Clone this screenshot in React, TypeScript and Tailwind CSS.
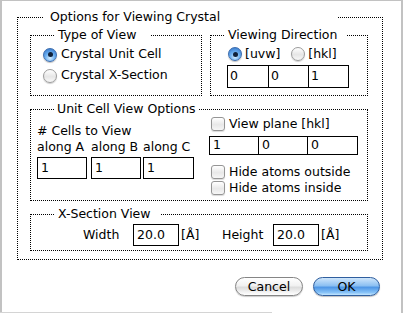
import type { ReactNode } from "react";

const Radio = ({ on }: { on?: boolean }) =>
  on ? (
    <span className="flex h-[14px] w-[14px] shrink-0 items-center justify-center rounded-full border border-[#3b6cae] bg-[radial-gradient(circle_at_50%_75%,#d2ecff_0%,#6aaef0_45%,#2d6fc4_100%)] shadow-[0_1px_1px_rgba(0,0,0,0.25)]">
      <span className="h-[5px] w-[5px] rounded-full bg-[#0f213a]" />
    </span>
  ) : (
    <span className="block h-[14px] w-[14px] shrink-0 rounded-full border border-[#9b9b9b] bg-[linear-gradient(#ffffff,#e6e6e6_55%,#f8f8f8)] shadow-[0_1px_1px_rgba(0,0,0,0.2)]" />
  );

const Check = () => (
  <span className="block h-[14px] w-[14px] shrink-0 rounded-[3px] border border-[#959595] bg-[linear-gradient(#ffffff,#e8e8e8_55%,#f6f6f6)] shadow-[0_1px_1px_rgba(0,0,0,0.15)]" />
);

function Group({ title, legend, className, children }: { title: string; legend: string; className: string; children: ReactNode }) {
  return (
    <fieldset className={`border border-dotted border-black ${className}`}>
      <legend className={`h-[16px] leading-[16px] ${legend}`}>{title}</legend>
      {children}
    </fieldset>
  );
}

// joined number boxes, like the [uvw] triplets
function Triplet({ vals, cells, h, pad }: { vals: string[]; cells: string[]; h: string; pad: string }) {
  return (
    <div className={`flex border border-black ${h}`}>
      {vals.map((v, i) => (
        <div key={i} className={`flex items-center ${pad} ${cells[i]} ${i > 0 ? "border-l border-black" : ""}`}>
          {v}
        </div>
      ))}
    </div>
  );
}

const Box = ({ value, className }: { value: string; className: string }) => (
  <div className={`flex items-center border border-black pl-[3px] ${className}`}>{value}</div>
);

export default function App() {
  return (
    <div className="relative flex h-[313px] w-[403px] flex-col border-t border-l-2 border-r-2 border-[#c2c2c2] bg-white font-['DejaVu_Sans',sans-serif] text-[12.5px] text-black">
      <Group title="Options for Viewing Crystal" legend="ml-[25px] w-[294px] pl-[7px]" className="ml-[15px] mt-[8px] w-[366px]">
        <div className="pl-[12px] pr-[14px] pt-[2px] pb-[8px]">
          <div className="flex gap-[8px]">
            <Group title="Type of View" legend="ml-[23px] w-[96px] pl-[4px]" className="w-[172px]">
              <div className="pl-[12px] pt-[1px] pb-[9px]">
                <div className="flex h-[21px] items-center gap-[4px]">
                  <Radio on />
                  <span>Crystal Unit Cell</span>
                </div>
                <div className="flex h-[21px] items-center gap-[4px]">
                  <Radio />
                  <span>Crystal X-Section</span>
                </div>
              </div>
            </Group>
            <Group title="Viewing Direction" legend="ml-[14px] w-[122px] pl-[3px]" className="w-[158px]">
              <div className="pl-[16px] pt-[1px] pb-[7px]">
                <div className="ml-[1px] flex h-[20px] items-center">
                  <Radio on />
                  <span className="ml-[3px]">[uvw]</span>
                  <span className="ml-[11px]">
                    <Radio />
                  </span>
                  <span className="ml-[3px]">[hkl]</span>
                </div>
                <div className="mt-[1px] w-fit">
                  <Triplet vals={["0", "0", "1"]} cells={["w-[40px]", "w-[40px]", "w-[40px]"]} h="h-[23px]" pad="pl-[2px]" />
                </div>
              </div>
            </Group>
          </div>

          <Group title="Unit Cell View Options" legend="ml-[24px] w-[143px] pl-[2px]" className="mt-[5px]">
            <div className="flex pl-[6px]">
              <div className="w-[172px] pt-[6px]">
                <div className="h-[16px] leading-[16px]">&#35; Cells to View</div>
                <div className="grid grid-cols-[54px_52px_51px] leading-[16px]">
                  <span>along A</span>
                  <span>along B</span>
                  <span>along C</span>
                </div>
                <div className="mt-[2px] grid grid-cols-[54px_52px_51px]">
                  <Box value="1" className="h-[22px] w-[50px]" />
                  <Box value="1" className="h-[22px] w-[50px]" />
                  <Box value="1" className="h-[22px] w-[51px]" />
                </div>
              </div>
              <div className="pb-[4px]">
                <div className="ml-[2px] flex h-[14px] items-center gap-[4px]">
                  <Check />
                  <span>View plane [hkl]</span>
                </div>
                <div className="mt-[5px] w-fit">
                  <Triplet vals={["1", "0", "0"]} cells={["w-[48px]", "w-[49px]", "w-[50px]"]} h="h-[19px]" pad="pl-[3px]" />
                </div>
                <div className="ml-[2px] mt-[9px] flex h-[16px] items-center gap-[4px]">
                  <Check />
                  <span>Hide atoms outside</span>
                </div>
                <div className="ml-[2px] flex h-[16px] items-center gap-[4px]">
                  <Check />
                  <span>Hide atoms inside</span>
                </div>
              </div>
            </div>
          </Group>

          <Group title="X-Section View" legend="ml-[24px] w-[105px] pl-[3px]" className="mt-[5px]">
            <div className="flex items-center pl-[52px] pt-[2px] pb-[4px]">
              <span className="w-[50px]">Width</span>
              <Box value="20.0" className="h-[22px] w-[46px]" />
              <span className="ml-[2px] w-[41px]">[Å]</span>
              <span className="w-[51px]">Height</span>
              <Box value="20.0" className="h-[22px] w-[46px]" />
              <span className="ml-[2px]">[Å]</span>
            </div>
          </Group>
        </div>
      </Group>

      <div className="mt-[17px] flex justify-end gap-[10px] pr-[21px]">
        <button className="h-[19px] w-[68px] rounded-full border border-[#858585] bg-[linear-gradient(#ffffff,#f1f1f1_45%,#dcdcdc_55%,#f4f4f4_85%,#ffffff)] leading-[17px] shadow-[0_1px_1px_rgba(0,0,0,0.2)]">
          Cancel
        </button>
        <button className="h-[19px] w-[67px] rounded-full border border-[#2f5e9e] bg-[linear-gradient(#cfe6fb,#8cc0f2_45%,#4f97e6_55%,#86c2f7_85%,#c4e6ff)] leading-[17px] shadow-[0_1px_1px_rgba(0,0,0,0.25)]">
          OK
        </button>
      </div>

      <div className="mt-auto -ml-[2px] h-[1px] w-[272px] bg-[#d4d4d4]" />
    </div>
  );
}
